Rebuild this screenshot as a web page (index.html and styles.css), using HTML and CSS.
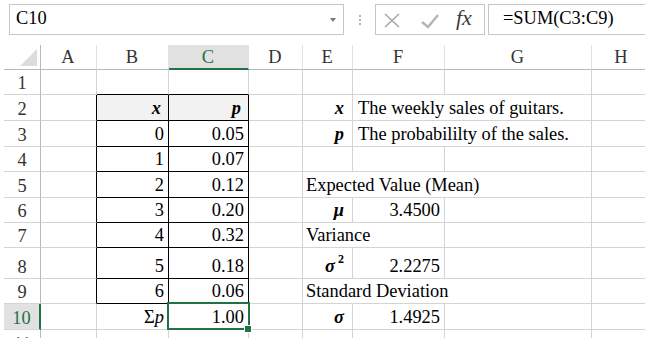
FILE: index.html
```html
<!DOCTYPE html>
<html lang="en">

<head>
    <meta charset="UTF-8">
    <meta name="viewport" content="width=device-width, initial-scale=1.0">
    <title>Expected value of guitar sales</title>
    <link rel="stylesheet" href="styles.css">
</head>

<body>
    <!-- Formula bar -->
    <div class="formula-bar">
        <div class="name-box">
            <span>C10</span>
            <span class="caret"></span>
        </div>
        <div class="grip"><i></i><i></i><i></i></div>
        <div class="fx-tools">
            <svg class="ico-x" width="16" height="15" viewBox="0 0 16 15">
                <path d="M1 1 L15 14 M15 1 L1 14" stroke="#a9a9a9" stroke-width="1.6" fill="none" />
            </svg>
            <svg class="ico-check" width="18" height="16" viewBox="0 0 18 16">
                <path d="M1 9 L7 14 L17 2" stroke="#b5b5b5" stroke-width="2.4" fill="none" />
            </svg>
            <span class="fx">fx</span>
        </div>
        <div class="formula">=SUM(C3:C9)</div>
    </div>

    <!-- Sheet -->
    <div class="sheet">
        <!-- column headers -->
        <div class="cell corner">
            <svg width="17" height="17" viewBox="0 0 17 17"><path d="M17 0 L17 17 L0 17 Z" fill="#dcdcdc" /></svg>
        </div>
        <div class="cell hd">A</div>
        <div class="cell hd">B</div>
        <div class="cell hd sel">C</div>
        <div class="cell hd">D</div>
        <div class="cell hd">E</div>
        <div class="cell hd">F</div>
        <div class="cell hd">G</div>
        <div class="cell hd">H</div>

        <!-- row 1 -->
        <div class="cell rh">1</div>
        <div class="cell"></div>
        <div class="cell tt"></div>
        <div class="cell tt"></div>
        <div class="cell"></div>
        <div class="cell"></div>
        <div class="cell"></div>
        <div class="cell"></div>
        <div class="cell"></div>

        <!-- row 2 -->
        <div class="cell rh">2</div>
        <div class="cell tl"></div>
        <div class="cell tb head r"><b><i>x</i></b></div>
        <div class="cell tb head r"><b><i>p</i></b></div>
        <div class="cell"></div>
        <div class="cell lbl"><b><i>x</i></b></div>
        <div class="cell txt span2">The weekly sales of guitars.</div>
        <div class="cell"></div>

        <!-- row 3 -->
        <div class="cell rh">3</div>
        <div class="cell tl"></div>
        <div class="cell tb r">0</div>
        <div class="cell tb r">0.05</div>
        <div class="cell"></div>
        <div class="cell lbl"><b><i>p</i></b></div>
        <div class="cell txt span2">The probabililty of the sales.</div>
        <div class="cell"></div>

        <!-- row 4 -->
        <div class="cell rh">4</div>
        <div class="cell tl"></div>
        <div class="cell tb r">1</div>
        <div class="cell tb r">0.07</div>
        <div class="cell"></div>
        <div class="cell"></div>
        <div class="cell"></div>
        <div class="cell"></div>
        <div class="cell"></div>

        <!-- row 5 -->
        <div class="cell rh">5</div>
        <div class="cell tl"></div>
        <div class="cell tb r">2</div>
        <div class="cell tb r">0.12</div>
        <div class="cell"></div>
        <div class="cell span3">Expected Value (Mean)</div>
        <div class="cell"></div>

        <!-- row 6 -->
        <div class="cell rh">6</div>
        <div class="cell tl"></div>
        <div class="cell tb r">3</div>
        <div class="cell tb r">0.20</div>
        <div class="cell"></div>
        <div class="cell lbl"><b><i>μ</i></b></div>
        <div class="cell r">3.4500</div>
        <div class="cell"></div>
        <div class="cell"></div>

        <!-- row 7 -->
        <div class="cell rh">7</div>
        <div class="cell tl"></div>
        <div class="cell tb r">4</div>
        <div class="cell tb r">0.32</div>
        <div class="cell"></div>
        <div class="cell span2">Variance</div>
        <div class="cell"></div>
        <div class="cell"></div>

        <!-- row 8 -->
        <div class="cell rh">8</div>
        <div class="cell tl"></div>
        <div class="cell tb r">5</div>
        <div class="cell tb r">0.18</div>
        <div class="cell"></div>
        <div class="cell lbl"><b><i>σ</i><sup>2</sup></b></div>
        <div class="cell r">2.2275</div>
        <div class="cell"></div>
        <div class="cell"></div>

        <!-- row 9 -->
        <div class="cell rh">9</div>
        <div class="cell tl"></div>
        <div class="cell tb r">6</div>
        <div class="cell tb r">0.06</div>
        <div class="cell"></div>
        <div class="cell span3">Standard Deviation</div>
        <div class="cell"></div>

        <!-- row 10 -->
        <div class="cell rh sel">10</div>
        <div class="cell"></div>
        <div class="cell r">Σ<i>p</i></div>
        <div class="cell r active">1.00</div>
        <div class="cell"></div>
        <div class="cell lbl"><b><i>σ</i></b></div>
        <div class="cell r">1.4925</div>
        <div class="cell"></div>
        <div class="cell"></div>

        <!-- row 11 -->
        <div class="cell rh">11</div>
        <div class="cell"></div>
        <div class="cell"></div>
        <div class="cell"></div>
        <div class="cell"></div>
        <div class="cell"></div>
        <div class="cell"></div>
        <div class="cell"></div>
        <div class="cell"></div>
    </div>
</body>

</html>
```

FILE: styles.css
```css
/* page */
body {
    margin: 0;
    font-family: "Liberation Serif", "Times New Roman", serif;
    font-size: 18.4px;
    color: #000;
    background: #ffffff;
    overflow: hidden;
}

/* formula bar */
.formula-bar {
    display: flex;
    align-items: center;
    height: 31px;
    padding: 4px 0 0 9px;
    margin-bottom: 10px;
}

.name-box {
    width: 335px;
    height: 31px;
    box-sizing: border-box;
    border: 1px solid #c6c6c6;
    display: flex;
    align-items: center;
    padding: 0 0 3px 6px;
}

.caret {
    margin-left: auto;
    margin-right: 7px;
    margin-top: 3px;
    border-left: 3px solid transparent;
    border-right: 3px solid transparent;
    border-top: 4px solid #777;
}

.grip {
    width: 30px;
    display: flex;
    flex-direction: column;
    align-items: center;
    gap: 2px;
    padding-left: 1px;
}

.grip i {
    width: 2px;
    height: 2px;
    background: #b0b0b0;
}

.fx-tools {
    width: 110px;
    height: 31px;
    box-sizing: border-box;
    border: 1px solid #c6c6c6;
    display: flex;
    align-items: center;
    padding-left: 8px;
}

.ico-x {
    margin-top: 1px;
}

.ico-check {
    margin-left: 21px;
    margin-top: 2px;
}

.fx {
    margin-left: 17px;
    font-style: italic;
    font-size: 22px;
    color: #3c3c3c;
    padding-bottom: 3px;
}

.formula {
    flex: 1;
    height: 31px;
    box-sizing: border-box;
    border: 1px solid #c6c6c6;
    border-right: none;
    margin-left: 3px;
    padding: 0 0 3px 14px;
    display: flex;
    align-items: center;
    white-space: nowrap;
}

/* sheet grid */
.sheet {
    display: grid;
    grid-template-columns: 37px 56px 72px 80px 54px 50px 92px 147px 60px;
    grid-template-rows: 25px 25px 26px 26px 25px 26px 25px 25px 31px 25px 26px 26px;
    margin-left: 4px;
}

.cell {
    box-sizing: border-box;
    border-right: 1px solid #d4d4d4;
    border-bottom: 1px solid #d4d4d4;
    display: flex;
    align-items: flex-end;
    padding: 0 4px 1px 3px;
    white-space: nowrap;
    min-width: 0;
    line-height: normal;
}

.r {
    justify-content: flex-end;
}

.span2 {
    grid-column: span 2;
}

.span3 {
    grid-column: span 3;
}

/* headers */
.corner {
    border-right-color: #b9b9b9;
    border-bottom-color: #b9b9b9;
    padding: 0 3px 3px 0;
    justify-content: flex-end;
}

.hd {
    justify-content: center;
    color: #333;
    border-right-color: #e1e1e1;
    border-bottom-color: #b9b9b9;
}

.hd.sel {
    background: #e1e1e1;
    color: #217346;
    border-bottom: 2px solid #217346;
    padding-bottom: 0;
}

.rh {
    justify-content: center;
    color: #333;
    border-right-color: #b9b9b9;
    padding: 0 0 0 0;
}

.rh.sel {
    background: #e1e1e1;
    color: #217346;
    border-right: 2px solid #217346;
}

/* the x / p table */
.tt {
    border-bottom-color: #000;
}

.tl {
    border-right-color: #000;
}

.tb {
    border-right-color: #000;
    border-bottom-color: #000;
}

.head {
    background: #f2f2f2;
}

.head i {
    padding-right: 3px;
}

/* right side labels */
.lbl {
    justify-content: flex-end;
    padding-right: 8px;
}

.lbl sup {
    font-size: 12px;
    line-height: 0;
    position: relative;
    top: -2px;
    margin-left: 3px;
}

.txt {
    padding-left: 5px;
}

/* active cell C10 */
.active {
    position: relative;
}

.active::after {
    content: "";
    position: absolute;
    left: -2px;
    top: -2px;
    right: -2px;
    bottom: -1px;
    border: 2px solid #217346;
}

.active::before {
    content: "";
    position: absolute;
    right: -4px;
    bottom: -4px;
    width: 6px;
    height: 6px;
    background: #217346;
    border: 1px solid #fff;
    z-index: 1;
}
```
